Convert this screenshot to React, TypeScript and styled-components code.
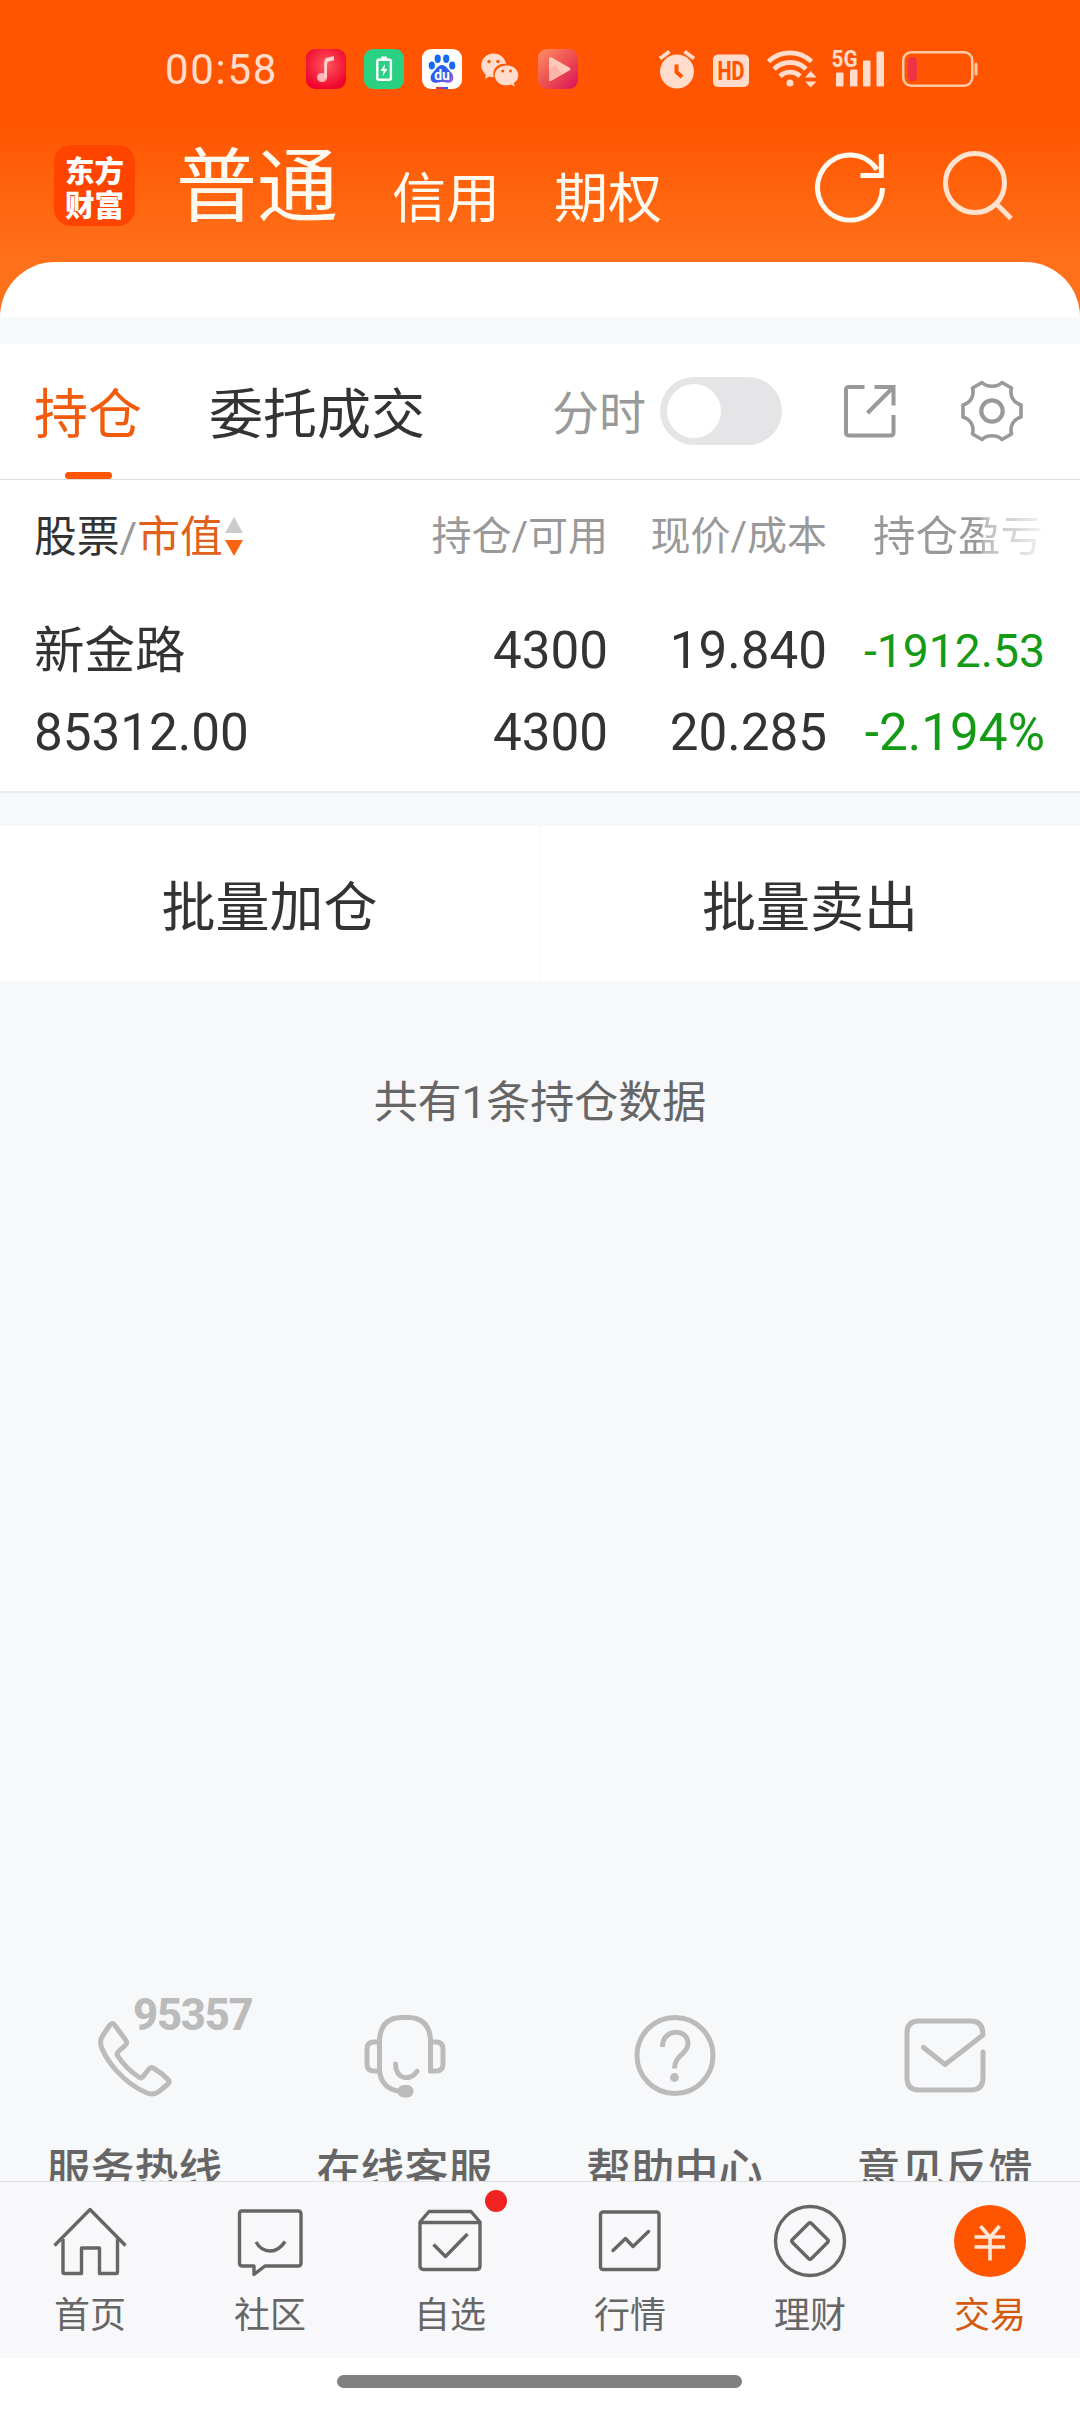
import React from 'react';
import styled, { createGlobalStyle, css } from 'styled-components';

const FONT = `Roboto, "Noto Sans CJK SC", sans-serif`;
const ORANGE = '#ff5500';
const STATUS = '#ffdccb';

const GlobalStyle = createGlobalStyle`
  *, *::before, *::after { box-sizing: border-box; }
  html, body { margin: 0; padding: 0; background: #fff; }
  body { font-family: ${FONT}; color: #333; -webkit-font-smoothing: antialiased; }
  svg { display: block; flex: none; overflow: visible; }
`;

const Screen = styled.div`
  width: 1080px;
  height: 2412px;
  display: flex;
  flex-direction: column;
  overflow: hidden;
  background: #f7f8fa;
`;

/* ---------- header ---------- */

const Header = styled.header`
  flex: none;
  height: 317px;
  display: flex;
  flex-direction: column;
  background: linear-gradient(180deg, #ff5500 0, #ff5500 122px, #ff6a14 225px, #ff701b 262px, #ff701b 100%);
`;

const StatusBar = styled.div`
  height: 138px;
  padding: 0 102px 0 165px;
  display: flex;
  align-items: center;
  justify-content: space-between;
`;

const StatusGroup = styled.div`
  display: flex;
  align-items: center;
  gap: 18px;
`;

const Clock = styled.span`
  width: 123px;
  font-size: 42px;
  line-height: 50px;
  letter-spacing: 1.7px;
  color: ${STATUS};
  padding-top: 2px;
`;

const AppBar = styled.div`
  height: 124px;
  padding: 0 67px 30px 54px;
  display: flex;
  align-items: center;
`;

const Logo = styled.div`
  width: 81px;
  height: 81px;
  margin: 1px 41px 0 0;
  border-radius: 17px;
  background: #ff4400;
  color: #fff;
  font: 900 29.5px/34px "Noto Sans CJK SC", sans-serif;
  text-align: center;
  display: flex;
  flex-direction: column;
  justify-content: center;
`;

const AccountTabs = styled.nav`
  flex: 1;
  align-self: flex-start;
  display: flex;
  align-items: flex-start;
  gap: 54px;
  color: #fffaf0;
`;

const AccountTab = styled.a<{ $active?: boolean }>`
  padding-top: ${(p) => (p.$active ? 5 : 17)}px;
  font-size: ${(p) => (p.$active ? 81 : 54)}px;
  line-height: 90px;
`;

const HeaderActions = styled.div`
  display: flex;
  gap: 58px;
  align-items: center;
  padding-top: 3px;
`;

const SheetTop = styled.div`
  height: 55px;
  background: #fff;
  border-radius: 55px 55px 0 0;
`;

/* ---------- holdings ---------- */

const Section = styled.section`
  flex: none;
  margin-top: 27px;
  background: #fff;
  border-bottom: 2px solid #ebecee;
  height: 449px;
`;

const TabRow = styled.div`
  height: 136px;
  padding: 0 57px 0 34px;
  display: flex;
  align-items: stretch;
  border-bottom: 1px solid #dcdcdc;
`;

const Tab = styled.button<{ $active?: boolean }>`
  border: 0;
  padding: 3px 0 0;
  margin-right: 67px;
  background: none;
  font: 400 54px/138px ${FONT};
  color: ${(p) => (p.$active ? '#f25a0c' : '#333')};
  display: flex;
  flex-direction: column;
  align-items: center;
  ${(p) =>
    p.$active &&
    css`
      &::after {
        content: '';
        width: 47px;
        height: 7px;
        margin-top: -13px;
        border-radius: 4px;
        background: ${ORANGE};
      }
    `}
`;

const Tools = styled.div`
  margin-left: auto;
  padding-bottom: 2px;
  display: flex;
  align-items: center;
`;

const ToolLabel = styled.span`
  font-size: 47px;
  line-height: 60px;
  color: #999;
  margin: 7px 14px 0 0;
`;

const Toggle = styled.button`
  width: 122px;
  height: 68px;
  padding: 0 7px;
  border: 0;
  border-radius: 34px;
  background: #e5e5e7;
  display: flex;
  align-items: center;
  margin-right: 62px;
  &::before {
    content: '';
    width: 54px;
    height: 54px;
    border-radius: 50%;
    background: #fff;
  }
`;

const GearWrap = styled.span`
  margin-left: 65px;
`;

const Grid = styled.div`
  display: grid;
  grid-template-columns: 374px 200px 219px 1fr;
  padding: 0 35px 0 34px;
`;

const HeadGrid = styled(Grid)`
  height: 114px;
  align-items: center;
  color: #999;
  line-height: 60px;
`;

const HeadCell = styled.div<{ $first?: boolean }>`
  display: flex;
  align-items: center;
  justify-content: ${(p) => (p.$first ? 'flex-start' : 'flex-end')};
  font-size: ${(p) => (p.$first ? 42.8 : 40)}px;
`;

const Dark = styled.span`
  color: #333;
`;

const Accent = styled.span`
  color: #e0601c;
  margin-right: 2px;
`;

const FadedHead = styled.div`
  padding-left: 46px;
  font-size: 42.5px;
  white-space: nowrap;
  background: linear-gradient(90deg, #999 0, #999 153px, #bbb 157px, #d0d0d0 180px, #e2e2e2 200px, #fafafa 222px);
  -webkit-background-clip: text;
  background-clip: text;
  color: transparent;
`;

const HoldingRow = styled(Grid)`
  padding-top: 16px;
  grid-auto-rows: 82px;
  align-items: center;
  font-size: 51px;
  line-height: 82px;
`;

const StockName = styled.div`
  font-size: 50.5px;
`;

const Num = styled.div<{ $align?: 'left'; $down?: boolean; $size?: number }>`
  text-align: ${(p) => p.$align || 'right'};
  color: ${(p) => (p.$down ? '#149a14' : '#333')};
  font-size: ${(p) => p.$size || 51.2}px;
`;

const Batch = styled.div`
  flex: none;
  margin-top: 33px;
  height: 155px;
  display: grid;
  grid-template-columns: 539px 541px;
  background: #fff;
`;

const BatchButton = styled.button`
  border: 0;
  background: none;
  padding: 10px 0 0;
  color: #333;
  font: 400 54px/80px ${FONT};
  & + & {
    border-left: 1px solid #f7f7f8;
  }
`;

const Summary = styled.p`
  flex: none;
  margin: 90px 0 0;
  text-align: center;
  color: #666;
  font-size: 44px;
  line-height: 64px;
`;

/* ---------- service shortcuts ---------- */

const Services = styled.div`
  margin-top: auto;
  flex: none;
  height: 200px;
  overflow: hidden;
  display: grid;
  grid-template-columns: repeat(4, 270px);
`;

const Service = styled.a`
  position: relative;
  padding-right: 1px;
  display: flex;
  flex-direction: column;
  align-items: center;
  color: #666;
  font-size: 44px;
  font-weight: 500;
  line-height: 60px;
  white-space: nowrap;
  svg {
    margin: 33px 0 44px;
  }
`;

const Hotline = styled.b`
  position: absolute;
  left: 133px;
  top: 10px;
  font: 800 43.5px/50px Roboto, sans-serif;
  letter-spacing: -1.2px;
  color: #bbb;
`;

/* ---------- bottom navigation ---------- */

const BottomNav = styled.nav`
  flex: none;
  height: 177px;
  border-top: 1px solid #dfe0e2;
  background: #f8f8fa;
  display: grid;
  grid-template-columns: repeat(6, 180px);
`;

const NavItem = styled.a<{ $active?: boolean }>`
  position: relative;
  padding-top: 23px;
  display: flex;
  flex-direction: column;
  align-items: center;
  gap: 12px;
  font-size: 36px;
  line-height: 50px;
  color: ${(p) => (p.$active ? '#d4580f' : '#666')};
`;

const Dot = styled.i`
  position: absolute;
  left: 125px;
  top: 8px;
  width: 22px;
  height: 22px;
  border-radius: 50%;
  background: #f02222;
`;

const HomeArea = styled.div`
  flex: none;
  height: 54px;
  background: #fff;
  display: flex;
  justify-content: center;
  padding: 17px 1px 0 0;
`;

const HomeBar = styled.div`
  width: 405px;
  height: 13px;
  border-radius: 7px;
  background: #808080;
`;

/* ---------- icons ---------- */

const MusicIcon = () => (
  <svg width="40" height="40" viewBox="0 0 40 40">
    <defs>
      <radialGradient id="music" cx=".5" cy=".4" r=".6">
        <stop offset="0" stopColor="#ff5a5c" />
        <stop offset="1" stopColor="#f0052e" />
      </radialGradient>
    </defs>
    <rect width="40" height="40" rx="9" fill="url(#music)" />
    <ellipse cx="16" cy="28.5" rx="5" ry="4.5" fill="#ffb5b5" />
    <path d="M18.200 28.500V13Q18.200 9.200 22 8.400L28 7V11.200L23.500 12.200Q21 12.800 21 15V28.500Z" fill="#ffd0d0" />
  </svg>
);

const ChargeIcon = () => (
  <svg width="40" height="40" viewBox="0 0 40 40">
    <rect width="40" height="40" rx="9" fill="#2bd182" />
    <rect x="13.300" y="10.800" width="13.600" height="20" rx="1.500" fill="none" stroke="#fff" strokeWidth="2.400" />
    <rect x="17" y="7.500" width="6" height="3" rx="1" fill="#fff" />
    <path d="M21 15l-4.500 7h3l-.8 5 4.800-7h-3z" fill="#fff" />
  </svg>
);

const BaiduIcon = () => (
  <svg width="40" height="40" viewBox="0 0 40 40">
    <defs>
      <linearGradient id="paw" x1="0" y1="0" x2="1" y2="1">
        <stop offset="0" stopColor="#1763f0" />
        <stop offset=".6" stopColor="#3a5bea" />
        <stop offset="1" stopColor="#b35fd6" />
      </linearGradient>
    </defs>
    <rect width="40" height="40" rx="9" fill="#fff" />
    <g fill="#1769f0">
      <ellipse cx="9.800" cy="16.500" rx="3.100" ry="4" />
      <ellipse cx="15.700" cy="9.800" rx="3.100" ry="4.200" />
      <ellipse cx="24.200" cy="9.800" rx="3.100" ry="4.200" />
      <ellipse cx="30.200" cy="16.500" rx="3.100" ry="4" />
    </g>
    <path d="M20 16c4 0 5.500 4 8 6.200 5 4.300 4.400 11.300-1.500 11.500-3 .1-4.200-.6-6.500-.6s-3.500.7-6.500.6C7.600 33.500 7 26.500 12 22.200 14.500 20 16 16 20 16z" fill="url(#paw)" />
    <text x="20" y="31" textAnchor="middle" fontFamily="Roboto" fontWeight="700" fontSize="14" fill="#fff">du</text>
    <path d="M14 38h6v2h-6z" fill="#e33" />
    <path d="M20 38h6v2h-6z" fill="#3a5bea" />
  </svg>
);

const WechatIcon = () => (
  <svg width="40" height="40" viewBox="0 0 40 40">
    <path d="M13.500 4.500C6.500 4.500 1.300 9.700 1.300 16.500c0 3.700 1.800 7 4.700 9.300L5 29.800l4.500-2.200c1.500.5 3 .6 4.300.5-2.300-8 4-14.200 12.400-13.300C25 8.800 20 4.500 13.500 4.500z" fill={STATUS} />
    <path d="M26.500 16.500c-6.800 0-11.700 4.400-11.700 9.900s5 9.900 11.700 9.900c1.500 0 3-.3 4.300-.8l4 2-1-3.600c2.800-1.800 4.500-4.500 4.500-7.500 0-5.500-5-9.900-11.800-9.900z" fill={STATUS} />
    <g fill={ORANGE}>
      <circle cx="9" cy="12.500" r="1.700" />
      <circle cx="18" cy="12.500" r="1.700" />
      <circle cx="22.700" cy="22" r="1.500" />
      <circle cx="30.500" cy="22" r="1.500" />
    </g>
  </svg>
);

const PlayIcon = () => (
  <svg width="40" height="40" viewBox="0 0 40 40">
    <defs>
      <linearGradient id="play" x1="0" y1="0" x2="1" y2="1">
        <stop offset="0" stopColor="#ff8e66" />
        <stop offset=".5" stopColor="#ee5050" />
        <stop offset="1" stopColor="#d8125e" />
      </linearGradient>
    </defs>
    <rect width="40" height="40" rx="9" fill="url(#play)" />
    <path d="M12.500 9.500v21L31 20z" fill="#ffc9bd" stroke="#ffc9bd" strokeWidth="3" strokeLinejoin="round" />
    <path d="M11 20l6-4 7 8.500-11.500 7.500H11z" fill="#ffb5a6" />
  </svg>
);

const AlarmIcon = () => (
  <svg width="36" height="40" viewBox="0 0 36 40">
    <circle cx="18" cy="22.500" r="17" fill={STATUS} />
    <path d="M1 9.500L10.500 2.500M35 9.500L25.500 2.500" stroke={STATUS} strokeWidth="4" />
    <path d="M17.500 15.500v7.500l5.500 5" fill="none" stroke={ORANGE} strokeWidth="4" />
  </svg>
);

const HdIcon = () => (
  <svg width="36" height="40" viewBox="0 0 36 40">
    <rect y="5.500" width="36" height="32.500" rx="5" fill={STATUS} />
    <text x="18" y="30.800" textAnchor="middle" fontFamily="Roboto" fontWeight="800" fontSize="25" textLength="27" lengthAdjust="spacingAndGlyphs" fill={ORANGE}>HD</text>
  </svg>
);

const WifiIcon = () => (
  <svg width="47" height="40" viewBox="0 0 47 40">
    <g fill="none" stroke={STATUS} strokeWidth="4.800">
      <path d="M1.500 12.500A31 31 0 0 1 44.500 12.500" />
      <path d="M7 20A23 23 0 0 1 39 20" />
      <path d="M13 27.200A14.500 14.500 0 0 1 33 27.200" />
    </g>
    <circle cx="23" cy="34" r="3.500" fill={STATUS} />
    <path d="M38 28.500h11.500L43.700 22zM38 32.500h11.500L43.700 38.500z" fill={STATUS} />
  </svg>
);

const SignalIcon = () => (
  <svg width="52" height="40" viewBox="0 0 52 40">
    <text x="-.5" y="17.500" fontFamily="Roboto" fontWeight="700" fontSize="23" textLength="26" lengthAdjust="spacingAndGlyphs" fill={STATUS}>5G</text>
    <g fill={STATUS}>
      <rect x="4" y="23.500" width="7.500" height="14" rx="1" />
      <rect x="18" y="20.500" width="7.500" height="17" rx="1" />
      <rect x="31" y="11.500" width="7.500" height="26" rx="1" />
      <rect x="44.500" y="2.500" width="7.500" height="35" rx="1" />
    </g>
  </svg>
);

const BatteryIcon = () => (
  <svg width="76" height="40" viewBox="0 0 76 40">
    <rect x="1.250" y="3.250" width="69" height="33.500" rx="8" fill="none" stroke="#ffc9a3" strokeWidth="2.500" />
    <rect x="6" y="8" width="9" height="24" rx="4" fill="#ee3344" />
    <path d="M74 15v10" stroke="#ffc9a3" strokeWidth="3" strokeLinecap="round" />
  </svg>
);

const RefreshIcon = () => (
  <svg width="70" height="70" viewBox="0 0 70 70" fill="none" stroke="#fffaf2" strokeWidth="5">
    <path d="M67.500 36A32.500 32.500 0 1 1 62 17.500" />
    <path d="M66.300 2v21.500H45.500" />
  </svg>
);

const SearchIcon = () => (
  <svg width="70" height="70" viewBox="0 0 70 70" fill="none" stroke="#ffe3cf" strokeWidth="5">
    <circle cx="32" cy="31" r="29.500" />
    <path d="M53.500 52L68 66.500" />
  </svg>
);

const SortIcon = () => (
  <svg width="18" height="40" viewBox="0 0 18 40">
    <path d="M9 0l9 16H0z" fill="#ccc" />
    <path d="M9 39l9-16H0z" fill="#f8640f" />
  </svg>
);

const ExportIcon = () => (
  <svg width="52" height="54" viewBox="0 0 52 54" fill="none" stroke="#999" strokeWidth="4">
    <path d="M20.500 3H5Q2 3 2 6V48.500Q2 51.500 5 51.500H46.500Q49.500 51.500 49.500 48.500V31" />
    <path d="M30.500 3H49.500V21.500M49 3.500L23.500 29" />
  </svg>
);

const GearIcon = () => (
  <svg width="62" height="62" viewBox="0 0 62 62" fill="none" stroke="#999" strokeLinejoin="round">
    <path
      strokeWidth="3.600"
      d="M21 2.500C26 7.500 36 7.500 41 2.500L50.500 8C48.500 15.500 52 22.500 60 25V37C52 39.500 48.500 46.500 50.500 54L41 59.500C36 54.500 26 54.500 21 59.500L11.500 54C13.500 46.500 10 39.500 2 37V25C10 22.500 13.500 15.500 11.500 8Z"
    />
    <circle cx="31" cy="31" r="10.700" strokeWidth="4.200" />
  </svg>
);

const serviceStroke = { fill: 'none', stroke: '#bbb', strokeWidth: 5, strokeLinecap: 'round', strokeLinejoin: 'round' } as const;

const PhoneIcon = () => (
  <svg width="82" height="83" viewBox="0 0 82 83" {...serviceStroke}>
    <path d="M15.500 11.500Q18.500 7.500 21 11.500L32 26.500Q33.500 29 31.500 31L24 38Q22.500 40 23.500 41.500Q32 55 45.500 63.500Q47.500 64.500 49 62.500L55 55Q57 52.500 60 54.500Q68.500 59.500 74.500 66Q76 68 74 70L65 77.500Q59 82 52 78.500C30 69 14 49 8 34.500Q5 27 8.500 22Z" />
  </svg>
);

const HeadsetIcon = () => (
  <svg width="82" height="83" viewBox="0 0 82 83" {...serviceStroke}>
    <path d="M15.500 57V25Q17.500 4 37 3.500H45Q64.500 4 66.500 25V57M15.500 28H10Q3 28 3 35V50Q3 57 10 57H15.500Q17.500 74 34 77" />
    <path d="M66.500 28H72Q79 28 79 35V50Q79 57 72 57H66.500" />
    <path d="M31.500 50C32 66 46 67 53 57.500" />
    <rect x="36" y="73.500" width="11" height="7.500" rx="3.700" fill="#bbb" />
  </svg>
);

const HelpIcon = () => (
  <svg width="82" height="83" viewBox="0 0 82 83" {...serviceStroke}>
    <circle cx="41" cy="41.500" r="38" />
    <path strokeLinecap="butt" d="M28.500 33C28 14 54 14 54 29.500C54 40 40.500 41 40.500 54.500" />
    <circle cx="40.500" cy="63.500" r="4.400" fill="#bbb" stroke="none" />
  </svg>
);

const MailIcon = () => (
  <svg width="82" height="83" viewBox="0 0 82 83" {...serviceStroke}>
    <path d="M79 38V64Q79 76 67 76H15Q3 76 3 64V19Q3 7 15 7H67Q79 7 79 21L41 50.500L19.500 33.500" />
  </svg>
);

const navStroke = { fill: 'none', stroke: '#666', strokeWidth: 3.4, strokeLinejoin: 'round' } as const;

const HomeIcon = () => (
  <svg width="74" height="74" viewBox="0 0 74 74" {...navStroke}>
    <path d="M1.500 40.500L37 4.500L72.500 40.500M10 34V67Q10 68.500 11.500 68.500H28.500V43H46.500V68.500H63Q64.500 68.500 64.500 67V34" />
  </svg>
);

const ChatIcon = () => (
  <svg width="74" height="74" viewBox="0 0 74 74" {...navStroke}>
    <path d="M9 6H65Q68 6 68 9V58Q68 61 65 61H32L21 69.500V61H9.500Q6.500 61 6.500 58V9Q6.500 6 9 6Z" />
    <path d="M23 37Q28 46 37 46T52 36.500" />
  </svg>
);

const BoxIcon = () => (
  <svg width="74" height="74" viewBox="0 0 74 74" {...navStroke}>
    <path d="M16 6.500H58L67 17V61Q67 64.500 63.500 64.500H10.500Q7 64.500 7 61V17ZM7 17.500H67M20.500 39.500L32.500 51.500L54.500 29" />
  </svg>
);

const ChartIcon = () => (
  <svg width="74" height="74" viewBox="0 0 74 74" {...navStroke}>
    <rect x="7.500" y="7" width="58.500" height="57.500" rx="2.500" />
    <path strokeLinecap="round" d="M20 45.500L32.500 33.500L40 41.500L55.500 26.500" />
  </svg>
);

const FundIcon = () => (
  <svg width="74" height="74" viewBox="0 0 74 74" {...navStroke}>
    <circle cx="37" cy="36" r="34.500" />
    <path d="M35.500 18.500Q37 17 38.500 18.500L54.500 34.500Q56 36 54.500 37.500L38.500 53.500Q37 55 35.500 53.500L19.500 37.500Q18 36 19.500 34.500Z" />
  </svg>
);

const TradeIcon = () => (
  <svg width="74" height="74" viewBox="0 0 74 74" fill="none" stroke="#ffe8d9" strokeWidth="3.600">
    <circle cx="37" cy="36" r="36" fill={ORANGE} stroke="none" />
    <path d="M27.500 21L37 32.500L46.500 21M21.500 32H52M21.500 42H52M37 32V55.500" />
  </svg>
);

/* ---------- data ---------- */

const SERVICES = [
  { label: '服务热线', Icon: PhoneIcon, badge: '95357' },
  { label: '在线客服', Icon: HeadsetIcon },
  { label: '帮助中心', Icon: HelpIcon },
  { label: '意见反馈', Icon: MailIcon },
];

const NAV = [
  { label: '首页', Icon: HomeIcon },
  { label: '社区', Icon: ChatIcon },
  { label: '自选', Icon: BoxIcon, dot: true },
  { label: '行情', Icon: ChartIcon },
  { label: '理财', Icon: FundIcon },
  { label: '交易', Icon: TradeIcon, active: true },
];

export default function App() {
  return (
    <Screen>
      <GlobalStyle />
      <Header>
        <StatusBar>
          <StatusGroup>
            <Clock>00:58</Clock>
            <MusicIcon />
            <ChargeIcon />
            <BaiduIcon />
            <WechatIcon />
            <PlayIcon />
          </StatusGroup>
          <StatusGroup>
            <AlarmIcon />
            <HdIcon />
            <WifiIcon />
            <SignalIcon />
            <BatteryIcon />
          </StatusGroup>
        </StatusBar>
        <AppBar>
          <Logo>
            <span>东方</span>
            <span>财富</span>
          </Logo>
          <AccountTabs>
            <AccountTab $active>普通</AccountTab>
            <AccountTab>信用</AccountTab>
            <AccountTab>期权</AccountTab>
          </AccountTabs>
          <HeaderActions>
            <RefreshIcon />
            <SearchIcon />
          </HeaderActions>
        </AppBar>
        <SheetTop />
      </Header>

      <Section>
        <TabRow>
          <Tab $active>持仓</Tab>
          <Tab>委托成交</Tab>
          <Tools>
            <ToolLabel>分时</ToolLabel>
            <Toggle aria-label="分时" />
            <ExportIcon />
            <GearWrap>
              <GearIcon />
            </GearWrap>
          </Tools>
        </TabRow>
        <HeadGrid>
          <HeadCell $first>
            <Dark>股票</Dark>/<Accent>市值</Accent>
            <SortIcon />
          </HeadCell>
          <HeadCell>持仓/可用</HeadCell>
          <HeadCell>现价/成本</HeadCell>
          <FadedHead>持仓盈亏</FadedHead>
        </HeadGrid>
        <HoldingRow>
          <StockName>新金路</StockName>
          <Num>4300</Num>
          <Num>19.840</Num>
          <Num $down $size={46.3}>-1912.53</Num>
          <Num $align="left">85312.00</Num>
          <Num>4300</Num>
          <Num>20.285</Num>
          <Num $down>-2.194%</Num>
        </HoldingRow>
      </Section>

      <Batch>
        <BatchButton>批量加仓</BatchButton>
        <BatchButton>批量卖出</BatchButton>
      </Batch>

      <Summary>共有1条持仓数据</Summary>

      <Services>
        {SERVICES.map(({ label, Icon, badge }) => (
          <Service key={label}>
            <Icon />
            {badge && <Hotline>{badge}</Hotline>}
            {label}
          </Service>
        ))}
      </Services>

      <BottomNav>
        {NAV.map(({ label, Icon, dot, active }) => (
          <NavItem key={label} $active={active}>
            <Icon />
            {dot && <Dot />}
            {label}
          </NavItem>
        ))}
      </BottomNav>
      <HomeArea>
        <HomeBar />
      </HomeArea>
    </Screen>
  );
}
